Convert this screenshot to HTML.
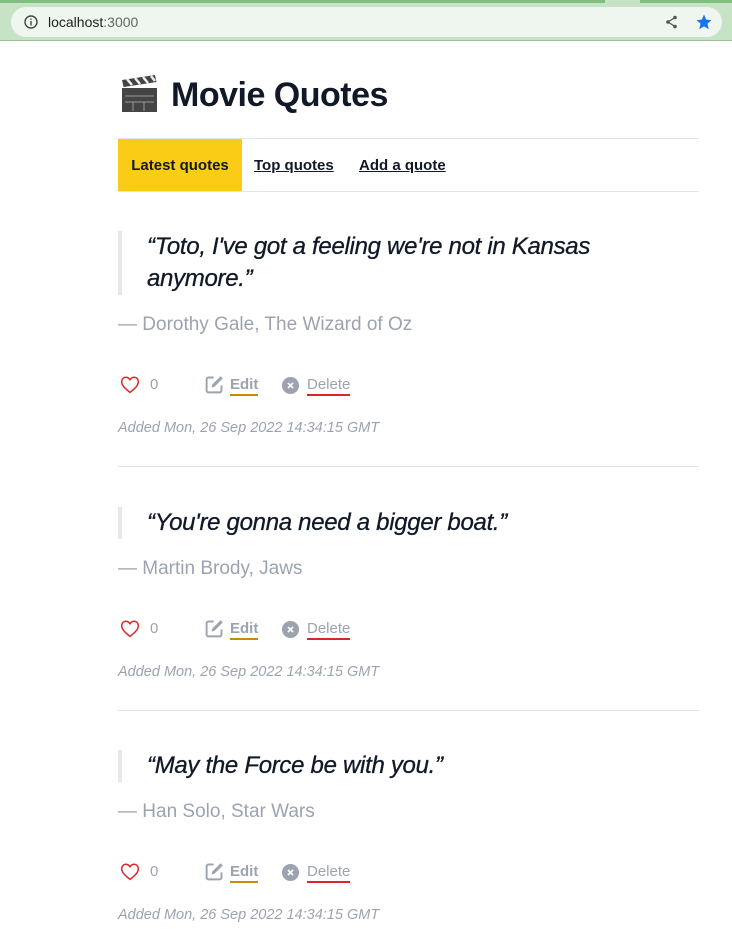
<!DOCTYPE html>
<html><head><meta charset="utf-8"><style>
*{margin:0;padding:0;box-sizing:border-box}
body{width:732px;height:929px;overflow:hidden;background:#fff;font-family:"Liberation Sans",sans-serif;color:#111827;position:relative}
.chrome{position:absolute;left:0;top:0;width:732px;height:41px;background:#c6e3c6;border-bottom:1px solid #9fbf9f}
.chrome .tab{position:absolute;top:0;left:0;width:605px;height:3px;background:#7fbf7f}
.chrome .tab2{position:absolute;top:0;left:640px;width:92px;height:3px;background:#7fbf7f}
.addr{position:absolute;left:11px;top:7px;width:711px;height:30px;border-radius:15px;background:#eff6ef}
.addr .t{position:absolute;left:37px;top:7px;font-size:14px;color:#222}
.addr .t span{color:#666}
.a{position:absolute}
h1{position:absolute;left:118px;top:76px;font-size:34px;font-weight:bold;letter-spacing:-0.5px;white-space:nowrap}
.nav{position:absolute;left:118px;top:138px;width:581px;height:54px;border-top:1px solid #e5e5e5;border-bottom:1px solid #e5e5e5}
.nav div{position:absolute;top:1px;height:52px;line-height:52px;font-size:15px;font-weight:bold;white-space:nowrap}
.q{position:absolute;left:118px;border-left:4px solid #e5e7eb;padding-left:25px;font-size:24px;font-style:italic;line-height:32px;letter-spacing:-0.3px;color:#111827;-webkit-text-stroke:0.3px #111827}
.by{position:absolute;left:118px;font-size:19px;color:#9ca3af}
.act{position:absolute;left:118px;height:24px;width:300px;font-size:15px;color:#9ca3af}
.added{position:absolute;left:118px;font-size:14.5px;font-style:italic;color:#9ca3af}
.sep{position:absolute;left:118px;width:581px;height:1px;background:#e5e5e5}
</style></head><body>
<div class="chrome"><div class="tab"></div><div class="tab2"></div>
<div class="addr">
<svg class="a" style="left:13px;top:8px" width="14" height="14" viewBox="0 0 14 14"><circle cx="7" cy="7" r="6" fill="none" stroke="#444" stroke-width="1.4"/><rect x="6.3" y="6" width="1.4" height="4.5" fill="#444"/><rect x="6.3" y="3.5" width="1.4" height="1.4" fill="#444"/></svg>
<div class="t">localhost<span>:3000</span></div>
<svg class="a" style="left:653px;top:7px" width="16" height="16" viewBox="0 0 16 16"><circle cx="11" cy="3.5" r="1.8" fill="#555"/><circle cx="4" cy="8" r="1.8" fill="#555"/><circle cx="11" cy="12.5" r="1.8" fill="#555"/><path d="M11 3.5L4 8L11 12.5" stroke="#555" stroke-width="1.3" fill="none"/></svg>
<svg class="a" style="left:684px;top:6px" width="18" height="18" viewBox="0 0 24 24"><path d="M12 2l2.9 6.9 7.1.6-5.4 4.7 1.6 7.3L12 17.8 5.8 21.5l1.6-7.3L2 9.5l7.1-.6z" fill="#1a73e8"/></svg>
</div></div>

<svg class="a" style="left:120px;top:74px" width="40" height="40" viewBox="0 0 40 40"><rect x="2" y="14" width="35" height="24" fill="#444"/><path d="M2 6l33-5 1.5 7-33 5z" fill="#444"/><path d="M7 5l5 6M15 4l5 6M23 3l5 6M31 2l4 5" stroke="#eee" stroke-width="2.5"/><path d="M5 22h29M5 28h29M13 28v9M24 28v9" stroke="#999" stroke-width="1"/></svg>
<h1 style="left:171px">Movie Quotes</h1>

<div class="nav">
<div style="left:0;top:0;width:124px;background:#facc15;text-align:center;line-height:54px">Latest quotes</div>
<div style="left:136px;text-decoration:underline">Top quotes</div>
<div style="left:241px;text-decoration:underline">Add a quote</div>
</div>

<div class="q" style="top:231px;width:520px">“Toto, I've got a feeling we're not in Kansas anymore.”</div>
<div class="by" style="top:314px">— Dorothy Gale, The Wizard of Oz</div>
<div class="act" style="top:373px"></div>
<div class="added" style="top:420px">Added Mon, 26 Sep 2022 14:34:15 GMT</div>
<div class="sep" style="top:466px"></div>

<div class="q" style="top:507px;width:560px">“You're gonna need a bigger boat.”</div>
<div class="by" style="top:558px">— Martin Brody, Jaws</div>
<div class="act" style="top:617px"></div>
<div class="added" style="top:664px">Added Mon, 26 Sep 2022 14:34:15 GMT</div>
<div class="sep" style="top:710px"></div>

<div class="q" style="top:750px;width:560px">“May the Force be with you.”</div>
<div class="by" style="top:801px">— Han Solo, Star Wars</div>
<div class="act" style="top:860px"></div>
<div class="added" style="top:907px">Added Mon, 26 Sep 2022 14:34:15 GMT</div>

<script>
var h='<svg class="a" style="left:2px;top:2px" width="20" height="19" viewBox="0 0 24 22"><path d="M12 20.5C5 15 2 11.5 2 7.5 2 4.5 4.3 2.3 7 2.3c2 0 3.7 1.1 5 3 1.3-1.9 3-3 5-3 2.7 0 5 2.2 5 5.2 0 4-3 7.5-10 13z" fill="none" stroke="#dc2626" stroke-width="1.8"/></svg>'+
'<div class="a" style="left:32px;top:3px">0</div>'+
'<svg class="a" style="left:86px;top:1px" width="21" height="21" viewBox="0 0 24 24"><path d="M11 4H5a2 2 0 0 0-2 2v13a2 2 0 0 0 2 2h13a2 2 0 0 0 2-2v-6" fill="none" stroke="#9ca3af" stroke-width="2.2"/><path d="M19 2.5l2.5 2.5L12 14.5l-3.5 1 1-3.5z" fill="#9ca3af"/></svg>'+
'<div class="a" style="left:112px;top:3px;font-weight:bold;border-bottom:2px solid #ca8a04;line-height:18px">Edit</div>'+
'<svg class="a" style="left:163px;top:3px" width="19" height="19" viewBox="0 0 20 20"><circle cx="10" cy="10" r="9" fill="#9ca3af"/><path d="M7.3 7.3l5.4 5.4M12.7 7.3l-5.4 5.4" stroke="#fff" stroke-width="1.8"/></svg>'+
'<div class="a" style="left:189px;top:3px;border-bottom:2px solid #dc2626;line-height:18px">Delete</div>';
document.querySelectorAll('.act').forEach(function(e){e.innerHTML=h});
</script>
</body></html>
